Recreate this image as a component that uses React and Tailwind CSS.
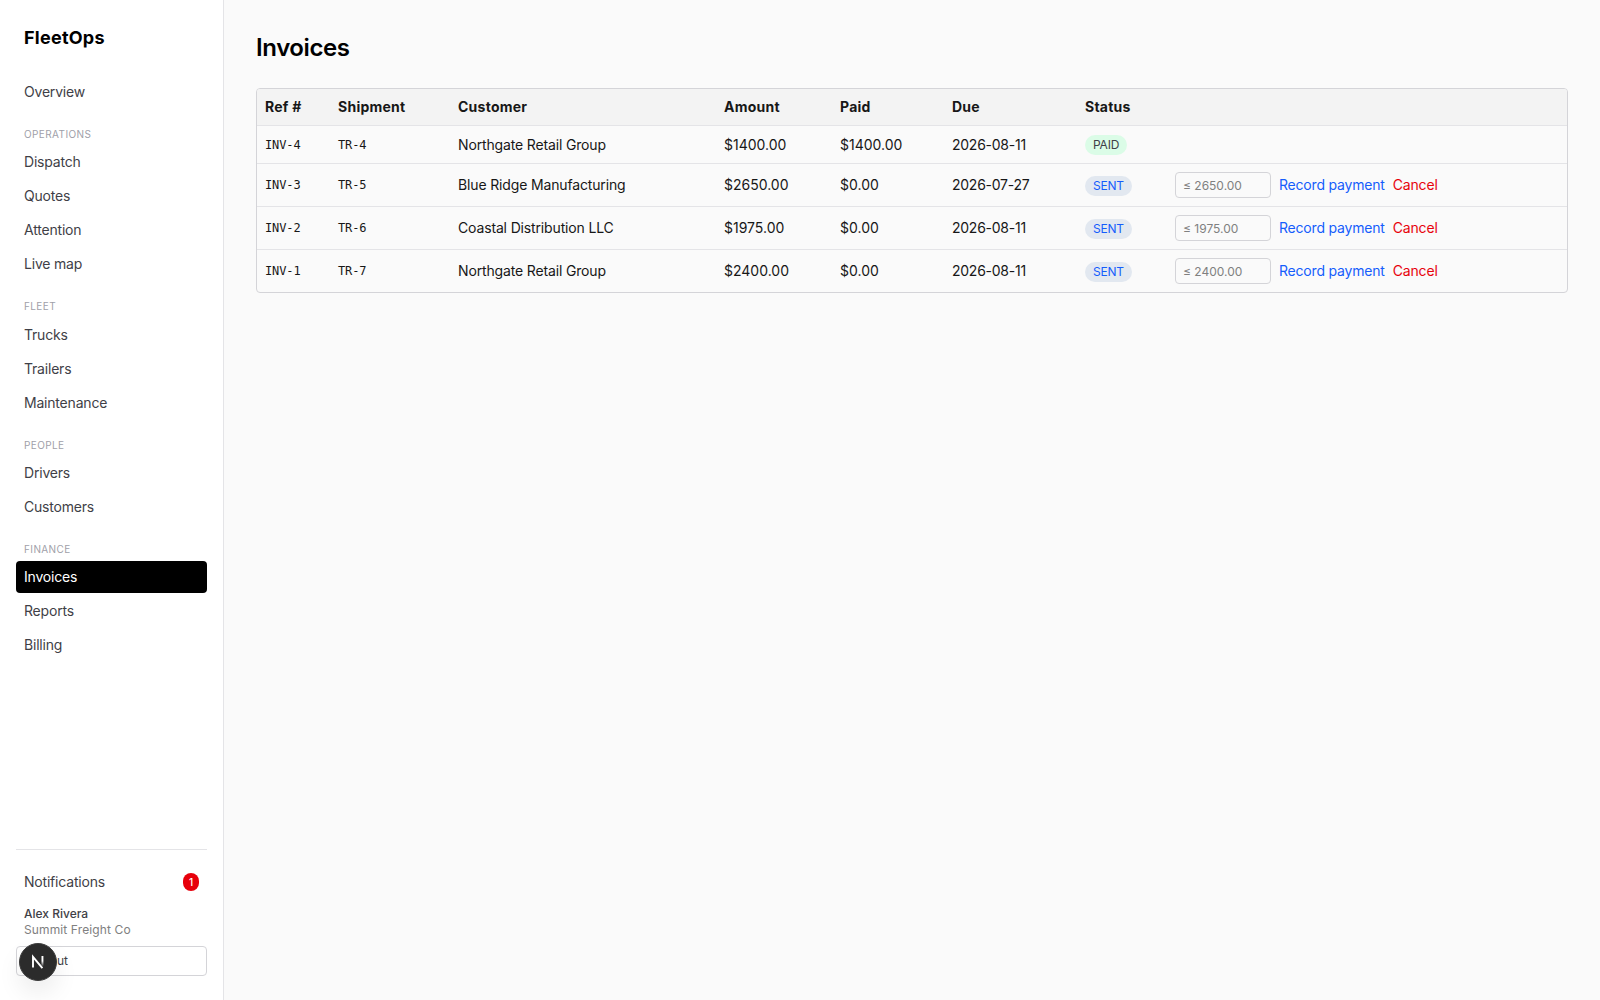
import React from "react";

const groups = [
  { title: "Operations", links: ["Dispatch", "Quotes", "Attention", "Live map"] },
  { title: "Fleet", links: ["Trucks", "Trailers", "Maintenance"] },
  { title: "People", links: ["Drivers", "Customers"] },
  { title: "Finance", links: ["Invoices", "Reports", "Billing"] },
];

const invoices = [
  { ref: "INV-4", shipment: "TR-4", customer: "Northgate Retail Group", amount: "1400.00", paid: "1400.00", due: "2026-08-11", status: "PAID" },
  { ref: "INV-3", shipment: "TR-5", customer: "Blue Ridge Manufacturing", amount: "2650.00", paid: "0.00", due: "2026-07-27", status: "SENT" },
  { ref: "INV-2", shipment: "TR-6", customer: "Coastal Distribution LLC", amount: "1975.00", paid: "0.00", due: "2026-08-11", status: "SENT" },
  { ref: "INV-1", shipment: "TR-7", customer: "Northgate Retail Group", amount: "2400.00", paid: "0.00", due: "2026-08-11", status: "SENT" },
];

const monoClassName = "px-2 text-xs tracking-[-0.1px] font-['DejaVu_Sans_Mono',monospace]";

function NavLink({ label, active, children }) {
  const className = [
    "flex h-8 items-center justify-between rounded px-2 text-sm tracking-[-0.2px]",
    active ? "bg-black text-white" : "text-zinc-700",
  ].join(" ");
  return (
    <a className={className} href="#">
      <span>{label}</span>
      {children}
    </a>
  );
}

function NavGroup({ title, links }) {
  return (
    <div className="flex flex-col gap-0.5">
      <div className="h-[36.25px] px-2 pt-[18px] text-[10px] leading-[17px] tracking-[0.4px] uppercase text-zinc-400">{title}</div>
      {links.map((label) => (
        <NavLink key={label} label={label} active={label === "Invoices"} />
      ))}
    </div>
  );
}

function Sidebar() {
  return (
    <aside className="flex w-56 shrink-0 flex-col border-r border-zinc-200 bg-white px-4 py-6">
      <div className="mb-6 px-2 text-lg font-bold tracking-[0.25px] text-black">FleetOps</div>
      <nav className="flex flex-1 flex-col">
        <NavLink label="Overview" />
        {groups.map((group) => (
          <NavGroup key={group.title} title={group.title} links={group.links} />
        ))}
      </nav>
      <div className="border-t border-zinc-200 pt-4">
        <NavLink label="Notifications">
          <span className="flex h-[18px] w-4 items-center justify-center rounded-full bg-red-600 text-[10px] font-medium text-white">1</span>
        </NavLink>
        <div className="mt-2 px-2 text-xs">
          <div className="font-medium text-zinc-700">Alex Rivera</div>
          <div className="tracking-[0.12px] text-[#808080]">Summit Freight Co</div>
        </div>
        <button className="mt-2 block w-full rounded border border-zinc-300 px-2 py-1.5 text-left text-xs text-zinc-700">Log out</button>
      </div>
    </aside>
  );
}

function StatusBadge({ status }) {
  const className = [
    "inline-flex h-5 items-center rounded-full px-2 text-xs",
    status === "PAID" ? "bg-green-100 tracking-[-0.2px] text-zinc-700" : "mt-0.5 bg-slate-200 tracking-[-0.2px] text-blue-600",
  ].join(" ");
  return <span className={className}>{status}</span>;
}

function InvoiceRow({ invoice, last }) {
  const open = invoice.status !== "PAID";
  const className = [
    open ? (last ? "h-[42px]" : "h-[43px]") : "h-[38px]",
    last ? "" : "[&>td]:border-b [&>td]:border-zinc-200",
  ].join(" ");
  return (
    <tr className={className}>
      <td className={monoClassName}>{invoice.ref}</td>
      <td className={monoClassName}>{invoice.shipment}</td>
      <td className="px-2 tracking-[-0.15px]">{invoice.customer}</td>
      <td className="px-2">${invoice.amount}</td>
      <td className="px-2">${invoice.paid}</td>
      <td className="px-2 tracking-[-0.25px]">{invoice.due}</td>
      <td className="px-2">
        <div className="flex"><StatusBadge status={invoice.status} /></div>
      </td>
      <td className="px-2">
        {open && (
          <div className="flex items-center gap-2">
            <input className="h-[26px] w-24 rounded border border-zinc-300 px-[7px] text-xs placeholder:text-[#808080]" placeholder={`≤ ${invoice.amount}`} />
            <button className="tracking-[-0.2px] text-blue-600">Record payment</button>
            <button className="tracking-[-0.15px] text-red-600">Cancel</button>
          </div>
        )}
      </td>
    </tr>
  );
}

function InvoiceTable() {
  return (
    <div className="overflow-hidden rounded border border-zinc-300">
      <table className="w-full table-fixed border-separate border-spacing-0 text-left text-sm">
        <colgroup>
          <col className="w-[73px]" />
          <col className="w-[120px]" />
          <col className="w-[266px]" />
          <col className="w-[116px]" />
          <col className="w-[112px]" />
          <col className="w-[133px]" />
          <col className="w-[90px]" />
          <col />
        </colgroup>
        <thead>
          <tr className="h-[37px] bg-[#f3f3f3]">
            {["Ref #", "Shipment", "Customer", "Amount", "Paid", "Due", "Status", ""].map((title) => (
              <th key={title} className="border-b border-zinc-200 px-2 font-bold tracking-[0.25px]">{title}</th>
            ))}
          </tr>
        </thead>
        <tbody>
          {invoices.map((invoice, index) => (
            <InvoiceRow key={invoice.ref} invoice={invoice} last={index === invoices.length - 1} />
          ))}
        </tbody>
      </table>
    </div>
  );
}

function DevBadge() {
  return (
    <div className="fixed bottom-[19px] left-[19px] flex size-[38px] items-center justify-center rounded-full border border-[#3b3b3b] bg-[#2b2b2b] shadow-[0_12px_24px_rgba(0,0,0,0.08)]">
      <svg className="size-4" viewBox="0 0 16 16" fill="none" strokeWidth="1.9">
        <defs>
          <linearGradient id="stem" x1="0" y1="2" x2="0" y2="12" gradientUnits="userSpaceOnUse">
            <stop offset="0.5" stopColor="white" />
            <stop offset="1" stopColor="white" stopOpacity="0.1" />
          </linearGradient>
        </defs>
        <path d="M3 13.5V2.8L12.4 14.2" stroke="white" />
        <path d="M11.5 2h1.9v10h-1.9z" fill="url(#stem)" />
      </svg>
    </div>
  );
}

export default function App() {
  return (
    <div className="flex h-screen bg-[#fafafa] font-[Inter,sans-serif] text-[#171717]">
      <Sidebar />
      <main className="flex-1 p-8">
        <h1 className="mb-6 text-2xl font-semibold tracking-[-0.4px] text-black">Invoices</h1>
        <InvoiceTable />
      </main>
      <DevBadge />
    </div>
  );
}
